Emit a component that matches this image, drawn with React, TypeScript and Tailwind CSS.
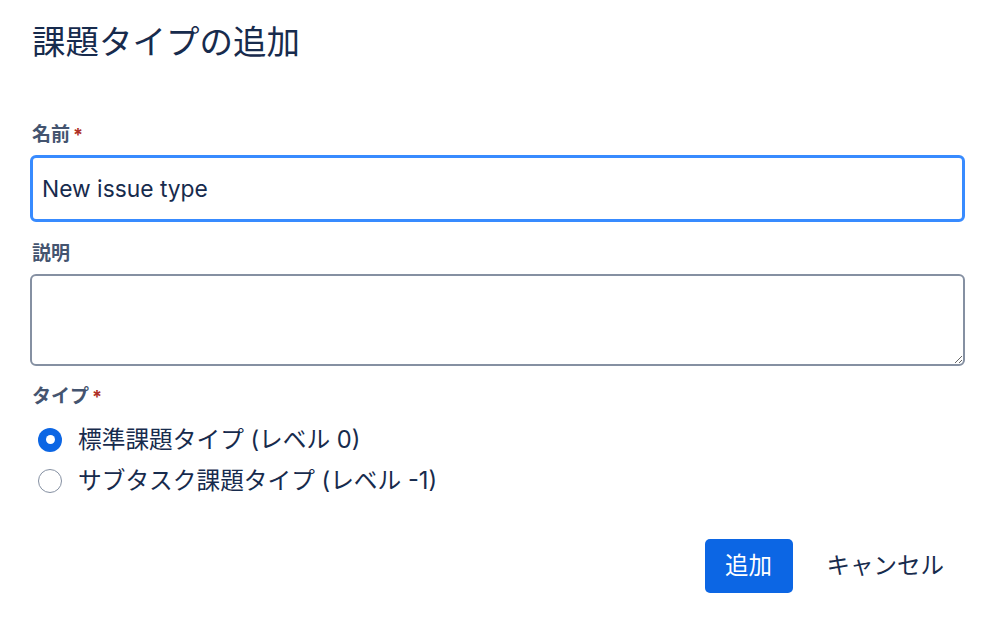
import { useState } from 'react'

const FONT = "font-['Inter','Noto_Sans_CJK_JP',sans-serif]"

function Label({ text, required }: { text: string; required?: boolean }) {
  return (
    <div className="flex h-6 items-center text-[19px] font-bold leading-6 text-[#44546F]">
      {text}
      {required && <span className="ml-[3px] text-[18px] text-[#AE2E24]">*</span>}
    </div>
  )
}

function Radio({ checked, label, onClick }: { checked: boolean; label: string; onClick: () => void }) {
  return (
    <button type="button" onClick={onClick} className="flex h-[41px] items-center gap-[16px] pl-[8px] text-left">
      {checked ? (
        <span className="flex h-[24px] w-[24px] items-center justify-center rounded-full bg-[#0C66E4]">
          <span className="h-[9px] w-[9px] rounded-full bg-white" />
        </span>
      ) : (
        <span className="h-[24px] w-[24px] rounded-full border-[1.5px] border-[#8590A2] bg-white" />
      )}
      <span className="text-[23.7px] text-[#172B4D]">{label}</span>
    </button>
  )
}

export default function App() {
  const [name, setName] = useState('New issue type')
  const [type, setType] = useState(0)

  return (
    <div className={`min-h-screen bg-white pl-[30px] pr-[33px] pt-[20px] ${FONT}`}>
      <h1 className="pl-[2px] text-[33.5px] font-normal leading-[44px] text-[#172B4D]">課題タイプの追加</h1>

      <form className="mt-[59px] flex flex-col" onSubmit={(e) => e.preventDefault()}>
        <div className="pl-[2px]">
          <Label text="名前" required />
        </div>
        <input
          value={name}
          onChange={(e) => setName(e.target.value)}
          className="mt-[8px] h-[67px] w-full rounded-[6px] border-[3px] border-[#388BFF] bg-white px-[9px] text-[22.8px] text-[#172B4D] outline-none"
        />

        <div className="mt-[20px] pl-[2px]">
          <Label text="説明" />
        </div>
        <textarea className="mt-[8px] h-[92px] w-full rounded-[6px] border-2 border-[#8590A2] bg-white px-[10px] py-[8px] text-[22.8px] text-[#172B4D] outline-none" />

        <div className="mt-[19px] pl-[2px]">
          <Label text="タイプ" required />
        </div>
        <div className="mt-[10px] flex flex-col">
          <Radio checked={type === 0} label="標準課題タイプ (レベル 0)" onClick={() => setType(0)} />
          <Radio checked={type === 1} label="サブタスク課題タイプ (レベル -1)" onClick={() => setType(1)} />
        </div>

        <div className="mt-[38px] flex justify-end gap-[13px]">
          <button type="submit" className="h-[54px] w-[88px] rounded-[5px] bg-[#0C66E4] text-[23.5px] text-white">
            追加
          </button>
          <button type="button" className="h-[54px] rounded-[5px] px-[21px] text-[23.5px] text-[#172B4D]">
            キャンセル
          </button>
        </div>
      </form>
    </div>
  )
}
